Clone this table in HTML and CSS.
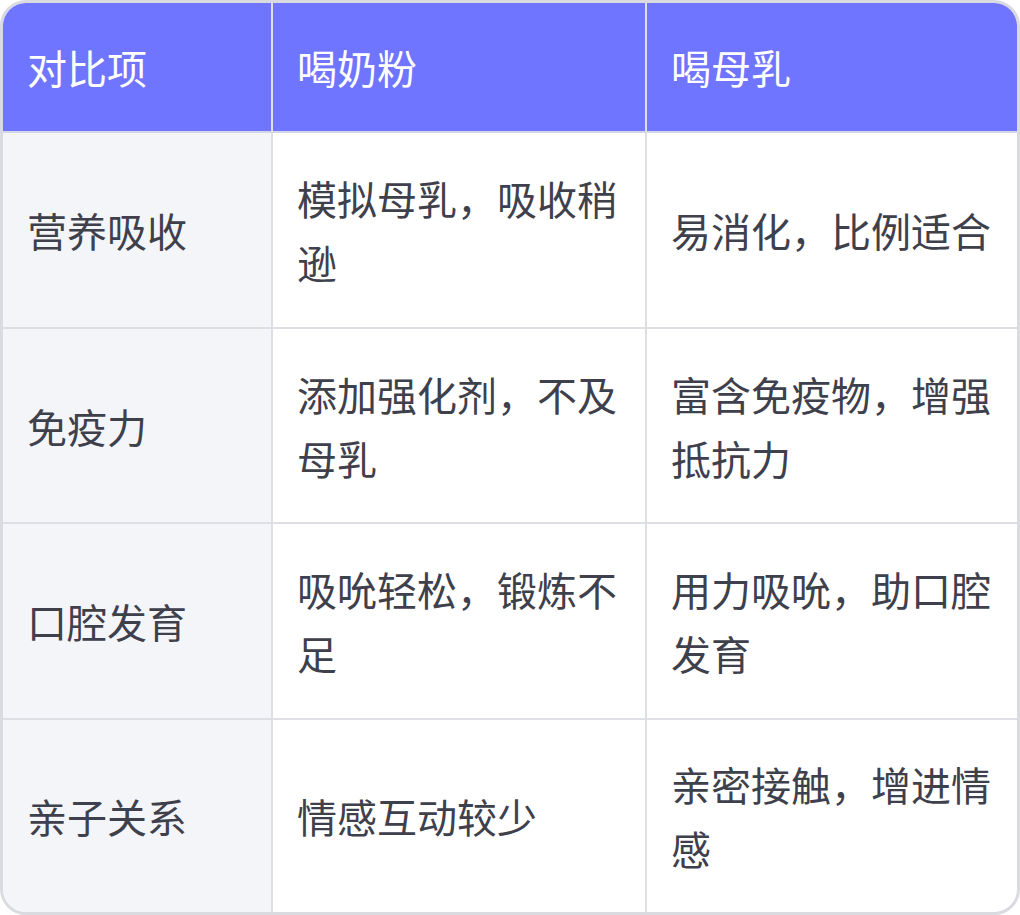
FILE: index.html
```html
<!DOCTYPE html>
<html lang="zh">
<head>
<meta charset="utf-8">
<link rel="stylesheet" href="styles.css">
</head>
<body>
<div class="card">
  <table class="cmp">
    <colgroup>
      <col class="c1"><col class="c2"><col class="c3">
    </colgroup>
    <thead>
      <tr class="head">
        <th>对比项</th>
        <th>喝奶粉</th>
        <th>喝母乳</th>
      </tr>
    </thead>
    <tbody>
      <tr class="r1">
        <td class="label">营养吸收</td>
        <td>模拟母乳，吸收稍逊</td>
        <td>易消化，比例适合</td>
      </tr>
      <tr class="r2">
        <td class="label">免疫力</td>
        <td>添加强化剂，不及母乳</td>
        <td>富含免疫物，增强抵抗力</td>
      </tr>
      <tr class="r3">
        <td class="label">口腔发育</td>
        <td>吸吮轻松，锻炼不足</td>
        <td>用力吸吮，助口腔发育</td>
      </tr>
      <tr class="r4">
        <td class="label">亲子关系</td>
        <td>情感互动较少</td>
        <td>亲密接触，增进情感</td>
      </tr>
    </tbody>
  </table>
</div>
</body>
</html>
```

FILE: styles.css
```css
html, body {
  margin: 0;
  padding: 0;
  background: #ffffff;
}

.card {
  width: 1020px;
  height: 915px;
  box-sizing: border-box;
  border: 3px solid #dadbe0;
  border-radius: 26px;
  overflow: hidden;
  background: #ffffff;
}

.cmp {
  border-collapse: separate;
  border-spacing: 0;
  width: 1014px;
  table-layout: fixed;
  font-family: "Noto Sans CJK SC", "Noto Sans", sans-serif;
  font-size: 40px;
  line-height: 64px;
  color: #3e404b;
}

.c1 { width: 270px; }
.c2 { width: 374px; }
.c3 { width: 370px; }

.cmp th,
.cmp td {
  padding: 0 24px;
  text-align: left;
  vertical-align: middle;
  border-right: 2px solid #dedfe4;
  border-bottom: 2px solid #dedfe4;
  font-weight: 400;
}

.cmp th:last-child,
.cmp td:last-child {
  border-right: none;
}

.cmp tbody tr:last-child td {
  border-bottom: none;
}

.head th {
  background: #6f75ff;
  color: #ffffff;
  height: 130px;
  box-sizing: border-box;
  border-bottom-color: #d4d5e6;
}

.label {
  background: #f4f5f9;
}

.r1 td { height: 196px; box-sizing: border-box; }
.r2 td { height: 195px; box-sizing: border-box; }
.r3 td { height: 196px; box-sizing: border-box; }
.r4 td { height: 192px; box-sizing: border-box; }
```
